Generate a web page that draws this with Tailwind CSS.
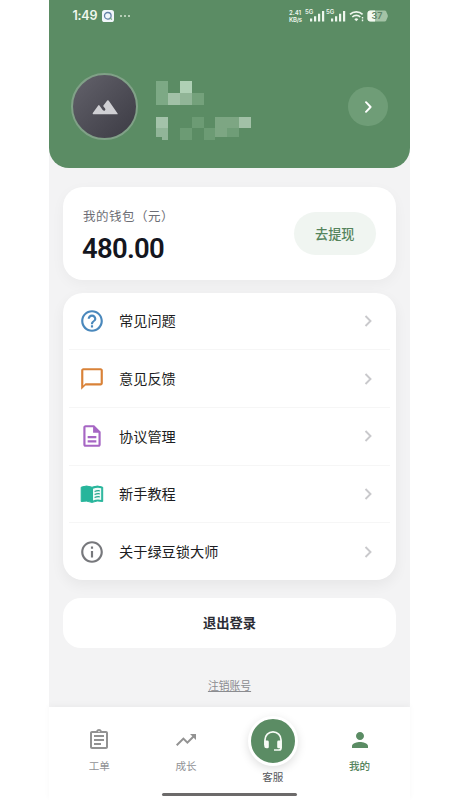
<!DOCTYPE html>
<html lang="zh-CN">
<head>
<meta charset="utf-8">
<meta name="viewport" content="width=device-width, initial-scale=1">
<title>我的</title>
<script src="https://cdn.jsdelivr.net/npm/@tailwindcss/browser@4"></script>
</head>
<body class="bg-white h-[800px] overflow-hidden font-['Noto_Sans_CJK_SC',sans-serif]">
<div class="ml-[49px] w-[361px] h-[800px] flex flex-col bg-[#f3f3f4]">

  <header class="h-[167.5px] shrink-0 bg-[#5b8c64] rounded-b-[20px]">
    <div class="h-8 pl-[23.5px] pr-[22.5px] flex items-center text-[#f0f7ee]">
      <span class="font-['Inter',sans-serif] font-semibold text-[12.5px] leading-none tracking-[-0.2px]">1:49</span>
      <svg class="ml-[5px] w-3 h-3" viewBox="0 0 12 12"><rect width="12" height="12" rx="2.6" fill="#f1f6fa"/><circle cx="5.8" cy="5.8" r="3.3" fill="none" stroke="#6482a8" stroke-width="1.3"/><path d="M7.6 7.8 10 9.4" stroke="#7ba986" stroke-width="1.2"/></svg>
      <svg class="ml-[6px] w-[10px] h-1" viewBox="0 0 10 4" fill="#d5e5d2"><circle cx="1" cy="2" r="1"/><circle cx="5" cy="2" r="1"/><circle cx="9" cy="2" r="1"/></svg>
      <div class="ml-auto flex items-center font-['Inter',sans-serif] font-semibold">
        <div class="w-[14.5px] text-[6px] leading-[7.5px] whitespace-nowrap"><div>2.41</div><div class="tracking-[-0.2px]">KB/s</div></div>
        <svg class="ml-px w-[20px] h-[14px]" viewBox="0 0 20 14" fill="#eef6ed"><text x="0" y="5.2" font-size="6">5G</text><path d="M5 9.5h2.200v3H5zM9 7.200h2.200v5.300H9zM13 4.800h2.200v7.700H13zM17 2h2.200v10.500H17z"/></svg>
        <svg class="ml-[1px] w-[20px] h-[14px]" viewBox="0 0 20 14" fill="#eef6ed"><text x="0" y="5.2" font-size="6">5G</text><path d="M5 9.5h2.200v3H5zM9 7.200h2.200v5.300H9zM13 4.800h2.200v7.700H13zM17 2h2.200v10.500H17z"/></svg>
        <svg class="ml-[3px] w-[16px] h-[12px]" viewBox="0 0 16 12" fill="none" stroke="#eef6ed" stroke-width="1.7"><path d="M1 4.4a9 9 0 0 1 12.6 0M3.3 7a5.8 5.8 0 0 1 8 0"/><path d="m7.3 11.3-2-2.1a3 3 0 0 1 4 0z" fill="#eef6ed" stroke="none"/><path d="M13.5 7v1.6M13.5 9.6v1.6" stroke-width="1.4"/></svg>
        <svg class="ml-[2px] w-[21px] h-[12px]" viewBox="0 0 21 12"><path d="M3.5.5h14.2q1 0 1.4.8l1.6 3.7q.3 1 0 2l-1.6 3.7q-.4.8-1.4.8H3.5q-3 0-3-3v-5q0-3 3-3z" fill="#a4c3a6"/><path d="M3.5.5H8v11H3.5q-3 0-3-3v-5q0-3 3-3z" fill="#f3f9f1"/><text x="4.5" y="9.3" font-size="9" font-weight="600" fill="#5f8466">37</text></svg>
      </div>
    </div>
    <div class="mt-[41px] h-[67px] pl-[22px] pr-[22.5px] flex items-center">
      <div class="w-[67px] h-[67px] shrink-0 rounded-full border-2 border-[#80a187] bg-linear-to-br from-[#63626b] to-[#3c3b44] flex items-center justify-center">
        <svg class="w-[26px] h-[16px]" viewBox="0 0 26 16" fill="#d0d0d4"><path d="M.8 14.100 6.200 6.400q.6-.8 1.300 0l3.200 4.600q1.200 1.200 2.200.5.900-.7.200-1.900l-2-2.700L15.200 1.600q.7-.9 1.400 0l9 12.800q.4.900-.5.900H1.300q-1 0-.5-1.200z"/></svg>
      </div>
      <svg class="ml-[18px] mt-[8.500px] w-[95px] h-[59.300px] shrink-0" viewBox="0 0 96 60" shape-rendering="crispEdges">
        <path fill="#7da985" d="M0 0h12v24H0z"/><path fill="#a2c1a7" d="M12 12h12v12H12z"/><path fill="#afd0b5" d="M24 0h12v12H24z"/><path fill="#91b597" d="M24 12h12v12H24z"/><path fill="#74a17b" d="M36 12h12v12H36z"/>
        <path fill="#a4c3aa" d="M0 36h12v12H0z"/><path fill="#91b598" d="M0 48h12v12H6v-3H0z"/><path fill="#6c9b74" d="M36 36h12v12H36zM24 48h12v12H24zM48 48h12v12H48z"/><path fill="#7da683" d="M60 36h24v12H72v9H60z"/><path fill="#6f9d77" d="M72 48h12v9H72z"/><path fill="#a2c1a7" d="M84 36h12v12H84z"/>
      </svg>
      <div class="ml-auto w-[39.5px] h-[39.5px] rounded-full bg-[#6f9d77] flex items-center justify-center">
        <svg class="w-2 h-3" viewBox="0 0 8 12" fill="none" stroke="white" stroke-width="1.9" stroke-linecap="round" stroke-linejoin="round"><path d="m2 1.200 4.600 4.800L2 10.800"/></svg>
      </div>
    </div>
  </header>

  <main class="flex-1 px-[14px] pt-[19.5px] flex flex-col">
    <section class="h-[93px] shrink-0 rounded-[20px] bg-white px-5 flex items-center shadow-[0_4px_14px_rgba(0,0,0,0.04)]">
      <div class="pt-[6px]">
        <div class="text-[12.5px] leading-[18px] tracking-[0.5px] text-[#6d6e76]">我的钱包（元）</div>
        <div class="mt-[6px] -ml-px font-['Roboto',sans-serif] font-semibold text-[27.500px] leading-[36px] tracking-[-0.750px] text-[#14161e]">480.00</div>
      </div>
      <button class="ml-auto w-[82.500px] h-[43px] rounded-full bg-[#f0f5f1] text-[13.200px] font-medium text-[#55845c]">去提现</button>
    </section>

    <section class="mt-[12.5px] h-[287.5px] shrink-0 rounded-[20px] bg-white flex flex-col divide-y divide-[#f6f6f6] text-[14.2px] font-normal text-[#1c1d22] shadow-[0_5px_14px_rgba(0,0,0,0.055)]">
      <div class="flex-1 flex items-center mx-1.5 pl-[10px] pr-[18px]">
        <svg class="w-[26px] h-[26px]" viewBox="0 0 24 24" fill="#4a88bc"><path d="M11 18h2v-2h-2v2zm1-16C6.480 2 2 6.480 2 12s4.480 10 10 10 10-4.480 10-10S17.520 2 12 2zm0 18c-4.410 0-8-3.590-8-8s3.590-8 8-8 8 3.590 8 8-3.590 8-8 8zm0-14c-2.210 0-4 1.790-4 4h2c0-1.100.9-2 2-2s2 .9 2 2c0 2-3 1.750-3 5h2c0-2.250 3-2.500 3-5 0-2.210-1.790-4-4-4z"/></svg>
        <span class="ml-[14px]">常见问题</span>
        <svg class="ml-auto w-2 h-3" viewBox="0 0 8 12" fill="none" stroke="#c9c9cc" stroke-width="1.9"><path d="m1.500 1 5 5-5 5"/></svg>
      </div>
      <div class="flex-1 flex items-center mx-1.5 pl-[10px] pr-[18px]">
        <svg class="w-[26px] h-[26px]" viewBox="0 0 24 24" fill="#d98238"><path d="M20 2H4c-1.100 0-2 .9-2 2v18l4-4h14c1.100 0 2-.9 2-2V4c0-1.100-.9-2-2-2zm0 14H6l-2 2V4h16v12z"/></svg>
        <span class="ml-[14px]">意见反馈</span>
        <svg class="ml-auto w-2 h-3" viewBox="0 0 8 12" fill="none" stroke="#c9c9cc" stroke-width="1.9"><path d="m1.500 1 5 5-5 5"/></svg>
      </div>
      <div class="flex-1 flex items-center mx-1.5 pl-[10px] pr-[18px]">
        <svg class="w-[26px] h-[26px]" viewBox="0 0 24 24" fill="#a666c4"><path d="M8 16h8v2H8zm0-4h8v2H8zm6-10H6c-1.100 0-2 .9-2 2v16c0 1.100.89 2 1.990 2H18c1.100 0 2-.9 2-2V8l-6-6zm4 18H6V4h7v5h5v11z"/></svg>
        <span class="ml-[14px]">协议管理</span>
        <svg class="ml-auto w-2 h-3" viewBox="0 0 8 12" fill="none" stroke="#c9c9cc" stroke-width="1.9"><path d="m1.500 1 5 5-5 5"/></svg>
      </div>
      <div class="flex-1 flex items-center mx-1.5 pl-[10px] pr-[18px]">
        <svg class="w-[26px] h-[26px]" viewBox="0 0 26 26"><path d="M2.200 6.200Q7.500 3.800 13 6.200q5.500-2.400 10.700 0V20.500q-5.500-1.500-10.700.9Q7.500 19.300 2.200 20.500z" fill="#27b59b" stroke="#27b59b" stroke-linejoin="round"/><path d="M14 7.800q4.300-1.800 8.200-.5v11.600q-4.200-.9-8.200.6z" fill="#eefaf7"/><path d="M15.600 10.500q2.700-1.200 5.200-.7M15.600 13.500q2.700-1.200 5.200-.7M15.600 16.500q2.700-1.200 5.200-.7" fill="none" stroke="#27a58f" stroke-width="1.300"/></svg>
        <span class="ml-[14px]">新手教程</span>
        <svg class="ml-auto w-2 h-3" viewBox="0 0 8 12" fill="none" stroke="#c9c9cc" stroke-width="1.9"><path d="m1.500 1 5 5-5 5"/></svg>
      </div>
      <div class="flex-1 flex items-center mx-1.5 pl-[10px] pr-[18px]">
        <svg class="w-[26px] h-[26px]" viewBox="0 0 24 24" fill="#77787c"><path d="M11 7h2v2h-2zm0 4h2v6h-2zm1-9C6.480 2 2 6.480 2 12s4.480 10 10 10 10-4.480 10-10S17.520 2 12 2zm0 18c-4.410 0-8-3.590-8-8s3.590-8 8-8 8 3.590 8 8-3.590 8-8 8z"/></svg>
        <span class="ml-[14px]">关于绿豆锁大师</span>
        <svg class="ml-auto w-2 h-3" viewBox="0 0 8 12" fill="none" stroke="#c9c9cc" stroke-width="1.9"><path d="m1.500 1 5 5-5 5"/></svg>
      </div>
    </section>

    <button class="mt-[17.5px] h-[50px] shrink-0 rounded-[18px] bg-white pt-px text-[13.3px] font-bold text-[#2b2c34]">退出登录</button>
    <a class="mt-[28px] self-center text-[10.8px] leading-[18px] text-[#8b8c90] underline underline-offset-1 decoration-1">注销账号</a>
  </main>

  <nav class="h-[93px] shrink-0 bg-white px-[7px] shadow-[0_-2px_6px_rgba(0,0,0,0.035)] flex flex-col">
    <div class="h-[84px] flex text-[10.6px] leading-[16px] text-[#919296]">
      <div class="flex-1 flex flex-col items-center pt-[21px]">
        <svg class="w-[24px] h-[24px]" viewBox="0 0 24 24" fill="#929292"><path d="M7 15h7v2H7zm0-4h10v2H7zm0-4h10v2H7zm12-4h-4.180C14.400 1.840 13.300 1 12 1c-1.300 0-2.400.84-2.820 2H5c-1.100 0-2 .9-2 2v14c0 1.100.9 2 2 2h14c1.100 0 2-.9 2-2V5c0-1.100-.9-2-2-2zm0 16H5V5h14v14zM12 2.750c.41 0 .75.340.75.750s-.34.750-.75.750-.75-.34-.75-.75.340-.75.750-.75z"/></svg>
        <span class="mt-[6px]">工单</span>
      </div>
      <div class="flex-1 flex flex-col items-center pt-[21px]">
        <svg class="w-[24px] h-[24px]" viewBox="0 0 24 24" fill="#929292"><path d="m16 6 2.290 2.290-4.880 4.880-4-4L2 16.590 3.410 18l6-6 4 4 6.300-6.290L22 12V6z"/></svg>
        <span class="mt-[6px]">成长</span>
      </div>
      <div class="flex-1 flex flex-col items-center pt-[8.500px] text-[#55565a]">
        <div class="w-[50px] h-[50px] shrink-0 rounded-full border-[3.500px] border-white bg-[#5b8c64] shadow-[0_3px_10px_rgba(0,0,0,0.13)] flex items-center justify-center">
          <svg class="w-[22px] h-[23px]" viewBox="0 0 22 23"><path d="M3 16v-5.200a8 8 0 0 1 16 0V19q0 2-2 2h-5" fill="none" stroke="#f7fbf6" stroke-width="1.700"/><path d="M3 11.500h2.400q1.400 0 1.400 1.400v5q0 1.400-1.400 1.400H4.600q-2.400 0-2.400-2.400v-5.400zM19.800 11.500h-3.200q-1.400 0-1.400 1.400v5q0 1.400 1.400 1.400h3.200z" fill="#f7fbf6"/></svg>
        </div>
        <span class="mt-[3.500px]">客服</span>
      </div>
      <div class="flex-1 flex flex-col items-center pt-[21px] font-medium text-[#55845c]">
        <svg class="w-[24px] h-[24px]" viewBox="0 0 24 24" fill="#5b8c64"><path d="M12 12c2.210 0 4-1.790 4-4s-1.790-4-4-4-4 1.790-4 4 1.790 4 4 4zm0 2c-2.670 0-8 1.340-8 4v2h16v-2c0-2.660-5.330-4-8-4z"/></svg>
        <span class="mt-[6px]">我的</span>
      </div>
    </div>
    <div class="mt-[1.5px] self-center w-[135px] h-[3.5px] rounded-full bg-[#6c6a6a]"></div>
  </nav>
</div>
</body>
</html>
